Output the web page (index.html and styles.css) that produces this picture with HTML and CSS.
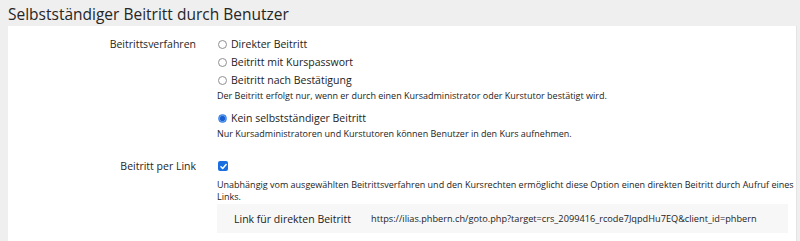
FILE: index.html
```html
<!DOCTYPE html>
<html lang="de">
<head>
    <meta charset="UTF-8">
    <title>Selbstständiger Beitritt</title>
    <link rel="stylesheet" href="styles.css">
</head>
<body>
    <h2 class="section-title">Selbstständiger Beitritt durch Benutzer</h2>

    <div class="panel">
        <div class="form-row">
            <div class="form-label">Beitrittsverfahren</div>
            <div class="form-field">
                <label class="radio"><span class="radio-dot"></span>Direkter Beitritt</label>
                <label class="radio"><span class="radio-dot"></span>Beitritt mit Kurspasswort</label>
                <label class="radio"><span class="radio-dot"></span>Beitritt nach Bestätigung</label>
                <div class="help">Der Beitritt erfolgt nur, wenn er durch einen Kursadministrator oder Kurstutor bestätigt wird.</div>
                <label class="radio radio-gap"><span class="radio-dot checked"></span>Kein selbstständiger Beitritt</label>
                <div class="help">Nur Kursadministratoren und Kurstutoren können Benutzer in den Kurs aufnehmen.</div>
            </div>
        </div>

        <div class="form-row row-link">
            <div class="form-label">Beitritt per Link</div>
            <div class="form-field">
                <div class="check-line">
                    <span class="checkbox">
                        <svg width="9" height="9" viewBox="0 0 10 10">
                            <path d="M2.2 5.3l1.9 1.9 3.8-4.3" fill="none" stroke="white" stroke-width="1.7" stroke-linecap="round" stroke-linejoin="round"/>
                        </svg>
                    </span>
                </div>
                <div class="help help-wide">Unabhängig vom ausgewählten Beitrittsverfahren und den Kursrechten ermöglicht diese Option einen direkten Beitritt durch Aufruf eines Links.</div>
                <div class="link-box">
                    <span class="link-label">Link für direkten Beitritt</span>
                    <span class="link-url">https://ilias.phbern.ch/goto.php?target=crs_2099416_rcode7JqpdHu7EQ&amp;client_id=phbern</span>
                </div>
            </div>
        </div>
    </div>
</body>
</html>
```

FILE: styles.css
```css
* {
    margin: 0;
    padding: 0;
    box-sizing: border-box;
}

body {
    font-family: "Open Sans", "Noto Sans", sans-serif;
    background-color: #efefef;
    color: #1c1c1c;
    padding: 0 0 0 8px;
    height: 241px;
    overflow: hidden;
}

.section-title {
    font-size: 15.5px;
    font-weight: normal;
    color: #262626;
    line-height: 20px;
    padding-top: 4px;
    height: 26px;
}

.panel {
    background-color: #fff;
    width: 789px;
    height: 215px;
    border-right: 1px solid #e4e4e4;
    padding-top: 9px;
}

.form-row {
    display: flex;
}

.row-link {
    margin-top: 17px;
}

.form-label {
    width: 188px;
    text-align: right;
    font-size: 10.5px;
    line-height: 18px;
    color: #262626;
}

.form-field {
    padding-left: 21px;
    flex: 1;
}

.radio {
    display: flex;
    align-items: center;
    font-size: 10.5px;
    line-height: 18px;
}

.radio-gap {
    margin-top: 7px;
}

.radio-dot {
    width: 9px;
    height: 9px;
    border: 1px solid #8f8f8f;
    border-radius: 50%;
    margin: 0 4px 0 1px;
    background: #fff;
}

.radio-dot.checked {
    border-color: #3b82e6;
    background: radial-gradient(circle, #1a5fd0 0 2.2px, #5c9cf0 2.8px);
}

.help {
    font-size: 9px;
    line-height: 12px;
    padding-top: 1px;
}

.help-wide {
    padding-top: 4px;
}

.check-line {
    height: 18px;
    display: flex;
    align-items: center;
}

.checkbox {
    display: flex;
    align-items: center;
    justify-content: center;
    width: 10px;
    height: 10px;
    background-color: #1a6fe0;
    border-radius: 2px;
    margin-left: 1px;
}

.link-box {
    display: flex;
    align-items: center;
    background-color: #f7f7f7;
    height: 29px;
    margin: 1px 8px 0 0;
    padding-left: 17px;
}

.link-label {
    font-size: 10.5px;
    width: 137px;
}

.link-url {
    font-size: 9.2px;
}
```
